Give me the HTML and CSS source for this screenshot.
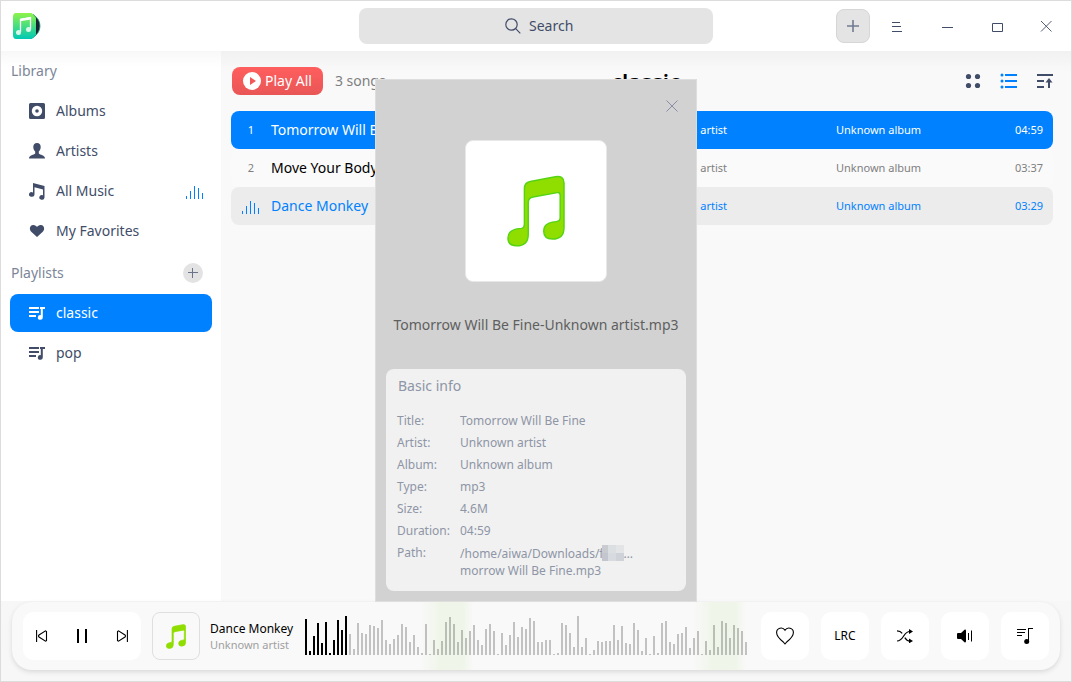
FILE: index.html
```html
<!DOCTYPE html>
<html lang="en">
<head>
<meta charset="utf-8">
<title>Music</title>
<link rel="stylesheet" href="styles.css">
</head>
<body>
<svg class="defs" aria-hidden="true">
  <symbol id="note" viewBox="-1 -1 60 74">
    <path d="M17 13Q17 6.5 23 5.5L49 .5Q58 -.8 58 7V53Q58 65 46 65Q37 65 37 57Q37 49 46 47.5L50 47Q54 46.5 54 43V20Q54 16.5 51 17L26 21.500Q21 22.500 21 27V60Q21 72 9 72Q0 72 0 64Q0 56.500 9 54.500L14 54Q17 53.500 17 50Z"/>
  </symbol>
  <symbol id="playlist" viewBox="0 0 16 14">
    <path d="M0 2h10M0 6h10M0 10h7" fill="none" stroke="currentColor" stroke-width="1.800"/>
    <path d="M11 1h5v2h-2.200v8.500a2.500 2.300 0 1 1-2-2.300V3H11z" fill="currentColor"/>
  </symbol>
  <symbol id="bars" viewBox="0 0 18 14">
    <path d="M0 10h1v3H0zM4 5h1v8H4zM8 0h1v13H8zM12 2h1v11h-1zM16 7h1v6h-1z" fill="currentColor"/>
  </symbol>
</svg>

<div class="window">
  <header class="titlebar">
    <svg class="logo" width="30" height="28" viewBox="0 0 30 28">
      <defs><linearGradient id="g" x1="0" y1="0" x2="0" y2="1"><stop offset="0" stop-color="#8df34a"/><stop offset="1" stop-color="#00c8b6"/></linearGradient></defs>
      <path d="M21 2.500Q28 7 28 14T21 25.500z" fill="#1b2130" stroke="#17a070" stroke-width=".8"/>
      <path d="M4 1H19.500L24 5.500V22.500L20 27H4Q1 27 1 23V5Q1 1 4 1z" fill="url(#g)"/>
      <path d="M8.500 20V7.200L18.500 5.500V17.500" fill="none" stroke="#fff" stroke-width="1.300"/>
      <path d="M8 7L19 5v2.500L8 9.300z" fill="#fff"/>
      <circle cx="6.500" cy="20.500" r="2.500" fill="#d9f8ea"/><circle cx="16.500" cy="17.500" r="2.500" fill="#d9f8ea"/>
    </svg>
    <label class="search">
      <svg width="16" height="16" viewBox="0 0 16 16" fill="none" stroke="currentColor" stroke-width="1.200"><circle cx="6.500" cy="6.500" r="5.700"/><path d="M10.700 10.700L15.300 15.300"/></svg>
      <input type="text" placeholder="Search" aria-label="Search">
    </label>
    <div class="window-tools">
      <button class="add" aria-label="Add"><svg width="12" height="12" viewBox="0 0 12 12" stroke="#717b91" stroke-width="1.600"><path d="M0 6h12M6 0v12"/></svg></button>
      <button class="tool" aria-label="Menu"><svg width="10" height="12" viewBox="0 0 10 12" fill="currentColor"><path d="M0 2h8v1H0zM0 6h9v1H0zM0 11h10v1H0z"/></svg></button>
      <button class="tool" aria-label="Minimize"><svg width="11" height="12" viewBox="0 0 11 12" fill="currentColor"><path d="M0 7h11v1H0z"/></svg></button>
      <button class="tool" aria-label="Maximize"><svg width="11" height="12" viewBox="0 0 11 12" fill="none" stroke="currentColor"><path d="M.5 3.500h10v8H.5z"/></svg></button>
      <button class="tool" aria-label="Close"><svg width="12" height="12" viewBox="0 0 12 12" stroke="currentColor" stroke-width=".9"><path d="M1 1l10.500 10.500M11.500 1L1 11.500"/></svg></button>
    </div>
  </header>

  <div class="body">
    <nav class="sidebar">
      <h2 class="section">Library</h2>
      <a class="item" href="#albums"><svg width="16" height="16" viewBox="0 0 16 16"><path fill-rule="evenodd" fill="currentColor" d="M1.500 0h13Q16 0 16 1.500v13Q16 16 14.500 16h-13Q0 16 0 14.500v-13Q0 0 1.500 0zM8 2.800a5.200 5.200 0 1 0 0 10.400a5.200 5.200 0 1 0 0-10.400zM8 6.200a1.800 1.800 0 1 1 0 3.600a1.800 1.800 0 1 1 0-3.600z"/></svg>Albums</a>
      <a class="item" href="#artists"><svg width="16" height="16" viewBox="0 0 16 16" fill="currentColor"><path d="M8 0C10.500 0 12 1.800 11.700 4.500C11.500 6.500 10.700 7.700 9.800 8.600V10.500C11 12 16 12 16 15.500H0C0 12 5 12 6.200 10.500V8.600C5.300 7.700 4.500 6.500 4.300 4.500C4 1.800 5.500 0 8 0z"/></svg>Artists</a>
      <a class="item" href="#music"><svg width="16" height="17" viewBox="0 0 16 17" fill="currentColor"><path d="M4 0L15.500 3V14.500a2.600 2.300 0 1 1-1.500-2.200V6.500L5.500 4.300V11.500a2.800 2.300 0 1 1-1.500-2z"/></svg>All Music<svg class="playing" width="18" height="14"><use href="#bars"/></svg></a>
      <a class="item" href="#favorites"><svg width="16" height="14" viewBox="0 0 16 14" fill="currentColor"><path d="M8 13L2.500 8C-.5 5 1 1 4.200 .9C6 .8 7.300 1.800 8 3C8.700 1.800 10 .8 11.800 .9C15 1 16.500 5 13.500 8z"/></svg>My Favorites</a>
      <div class="section playlists"><h2>Playlists</h2><button aria-label="New playlist"><svg width="10" height="10" viewBox="0 0 10 10" stroke="#6b748a"><path d="M0 4.500h10M4.500 0v10"/></svg></button></div>
      <a class="item active" href="#classic"><svg width="16" height="14"><use href="#playlist"/></svg>classic</a>
      <a class="item" href="#pop"><svg width="16" height="14"><use href="#playlist"/></svg>pop</a>
    </nav>

    <main class="main">
      <div class="toolbar">
        <div class="actions">
          <button class="play-all"><svg width="18" height="18" viewBox="0 0 18 18"><circle cx="9" cy="9" r="9" fill="#fff"/><path d="M7 5l6 4-6 4z" fill="#f25858"/></svg>Play All</button>
          <span class="count">3 songs</span>
        </div>
        <h1>classic</h1>
        <div class="views">
          <button aria-label="Grid view"><svg width="16" height="16" viewBox="0 0 16 16" fill="currentColor"><circle cx="3.500" cy="3.500" r="2.600"/><circle cx="12.500" cy="3.500" r="2.600"/><circle cx="3.500" cy="12.500" r="2.600"/><circle cx="12.500" cy="12.500" r="2.600"/></svg></button>
          <button class="on" aria-label="List view"><svg width="16" height="16" viewBox="0 0 16 16" fill="currentColor"><circle cx="1" cy="2" r="1.500"/><circle cx="1" cy="8" r="1.500"/><circle cx="1" cy="14" r="1.500"/><path d="M4 1h12v2H4zM4 7h12v2H4zM4 13h12v2H4z"/></svg></button>
          <button aria-label="Sort"><svg width="16" height="16" viewBox="0 0 16 16" fill="none" stroke="currentColor" stroke-width="2"><path d="M0 2h16M0 8h7M0 14h7M12 15V8"/><path d="M8.500 9.500L12 5l3.500 4.500z" fill="currentColor" stroke="none"/></svg></button>
        </div>
      </div>
      <table class="songs">
        <colgroup><col class="c-index"><col><col class="c-artist"><col class="c-album"></colgroup>
        <tbody>
          <tr class="selected"><td>1</td><td>Tomorrow Will Be Fine</td><td>Unknown artist</td><td><span class="cell"><span>Unknown album</span><time>04:59</time></span></td></tr>
          <tr><td>2</td><td>Move Your Body</td><td>Unknown artist</td><td><span class="cell"><span>Unknown album</span><time>03:37</time></span></td></tr>
          <tr class="current"><td><svg width="18" height="14" aria-label="Playing"><use href="#bars"/></svg></td><td>Dance Monkey</td><td>Unknown artist</td><td><span class="cell"><span>Unknown album</span><time>03:29</time></span></td></tr>
        </tbody>
      </table>
    </main>
  </div>

  <footer class="footer">
    <div class="player">
      <div class="controls">
        <button aria-label="Previous"><svg width="12" height="12" viewBox="0 0 12 12" fill="none" stroke="#000" stroke-width="1.100"><path d="M.6 0v12M10.500 1.500v9.200L9.500 11.200 3 7Q2 6 3 5L9.500 .8z"/></svg></button>
        <button aria-label="Pause"><svg width="10" height="14" viewBox="0 0 10 14"><path d="M0 0h2v14H0zM8 0h2v14H8z"/></svg></button>
        <button aria-label="Next"><svg width="12" height="12" viewBox="0 0 12 12" fill="none" stroke="#000" stroke-width="1.100"><path d="M11.400 0v12M1.500 1.500v9.200L2.500 11.200 9 7Q10 6 9 5L2.500 .8z"/></svg></button>
      </div>
      <div class="thumb"><svg width="20" height="25"><use href="#note"/></svg></div>
      <div class="now"><div class="now-title">Dance Monkey</div><div class="now-artist">Unknown artist</div></div>
      <div class="wave">
        <svg id="wave" height="40" width="100%"></svg>
        <input type="range" min="0" max="100" value="10" aria-label="Position">
      </div>
      <div class="extras">
        <button aria-label="Favorite"><svg width="18" height="18" viewBox="0 0 18 18" fill="none" stroke="#000" stroke-width="1.100"><path d="M9 17L7 14.700C3 11.500 .6 8.500 .6 5.500C.6 1 6.500 -.8 9 3.300C11.500 -.8 17.400 1 17.400 5.500C17.400 8.500 15 11.500 11 14.700z"/></svg></button>
        <button class="lrc">LRC</button>
        <button aria-label="Shuffle"><svg width="16" height="14" viewBox="0 0 16 14" fill="none" stroke="#000" stroke-width="1.200"><path d="M0 1.800C3 1.800 4.300 3 5.200 4.300M7.800 8.600C9 10.800 10.500 12 13 12M0 12C7 12 6 2.500 13 2.500"/><path d="M12 0l4 2.500L12 5zM12 9.500l4 2.500-4 2.300z" fill="#000" stroke="none"/></svg></button>
        <button aria-label="Volume"><svg width="16" height="14" viewBox="0 0 16 14"><path d="M1 4h3l3.500-3.300Q9 0 9 2v10Q9 14 7.500 13.300L4 10H1Q0 10 0 9V5Q0 4 1 4zM11 4h1v7h-1zM14 1.500h1v11h-1z"/></svg></button>
        <button aria-label="Play queue"><svg width="16" height="16" viewBox="0 0 16 16"><path d="M0 1h9v1H0zM0 4h8v1H0zM0 7h5v1H0zM11 0h5v1h-4v12.500h-1z"/><circle cx="9.700" cy="13.500" r="2.500"/></svg></button>
      </div>
    </div>
  </footer>

  <section class="dialog" role="dialog" aria-label="Music info">
    <button class="dialog-close" aria-label="Close"><svg width="12" height="12" viewBox="0 0 12 12" stroke="#8086a0" stroke-width=".9"><path d="M.5 .5l11 11M11.500 .5l-11 11"/></svg></button>
    <div class="cover"><svg width="58" height="72"><use href="#note"/></svg></div>
    <p class="file">Tomorrow Will Be Fine-Unknown artist.mp3</p>
    <div class="card">
      <h3>Basic info</h3>
      <dl>
        <dt>Title:</dt><dd>Tomorrow Will Be Fine</dd>
        <dt>Artist:</dt><dd>Unknown artist</dd>
        <dt>Album:</dt><dd>Unknown album</dd>
        <dt>Type:</dt><dd>mp3</dd>
        <dt>Size:</dt><dd>4.6M</dd>
        <dt>Duration:</dt><dd>04:59</dd>
        <dt>Path:</dt><dd class="path">/home/aiwa/Downloads/f<svg class="mosaic" width="22" height="16" viewBox="0 0 22 16" shape-rendering="crispEdges"><path fill="#c8cbd0" d="M0 0h6v8H0z"/><path fill="#dcdfe2" d="M6 0h8v8H6z"/><path fill="#e2e4e6" d="M14 0h8v8h-8z"/><path fill="#c3c6ce" d="M0 8h6v8H0z"/><path fill="#d7dadf" d="M6 8h8v8H6z"/><path fill="#cfd3d9" d="M14 8h8v8h-8z"/></svg>…<br>morrow Will Be Fine.mp3</dd>
      </dl>
    </div>
  </section>
</div>
<script src="app.js"></script>
</body>
</html>
```

FILE: app.js
```js
// Waveform: one 2px bar every 4px, standing on the baseline.
const levels = [
  36, 4, 19, 32, 12, 33, 2, 15, 35, 25, 39,
  21, 6, 32, 22, 21, 30, 29, 27, 35, 15, 11, 16, 20, 31, 28, 13, 20, 8, 2, 31, 1, 15, 6, 14, 33, 38, 31,
  13, 25, 17, 24, 30, 15, 10, 26, 31, 24, 1, 22, 10, 20, 33, 18, 28, 26, 37, 34, 13, 13, 15, 15, 1, 2,
  32, 30, 22, 8, 39, 8, 17, 1, 5, 14, 13, 14, 14, 30, 15, 29, 12, 11, 32, 25, 4, 17, 1, 19, 2, 32, 34,
  13, 11, 21, 22, 28, 7, 17, 24, 1, 14, 5, 30, 8, 34, 32, 17, 30, 27, 24, 13, 1
];
const played = 11;
const wave = document.getElementById('wave');
levels.forEach((level, i) => {
  const bar = document.createElementNS('http://www.w3.org/2000/svg', 'rect');
  bar.setAttribute('x', i * 4);
  bar.setAttribute('y', 39 - level);
  bar.setAttribute('width', 2);
  bar.setAttribute('height', level);
  bar.setAttribute('class', i < played ? 'bar played' : 'bar');
  wave.appendChild(bar);
});
```

FILE: styles.css
```css
* { box-sizing: border-box; }
body { margin: 0; font: 14px/20px "Noto Sans", sans-serif; color: #414d68; }
h1, h2, h3, p, dl, dd { margin: 0; font-weight: 400; }
button { display: flex; align-items: center; justify-content: center; margin: 0; padding: 0; border: 0; background: none; color: inherit; font: inherit; }
svg { display: block; flex: none; }
.defs { position: absolute; width: 0; height: 0; }

.window { position: relative; display: flex; flex-direction: column; min-height: 100vh; border: 1px solid #dcdcdc; background: #f8f8f8; }

.titlebar { display: grid; grid-template-columns: 1fr minmax(200px, 354px) 1fr; align-items: center; height: 50px; padding: 0 11px; background: #fff; }
.search { display: flex; align-items: center; justify-content: center; gap: 8px; height: 36px; padding-left: 10px; border-radius: 8px; background: #e4e4e4; }
.search input { width: 48px; padding: 0; border: 0; outline: 0; background: none; color: inherit; font: inherit; }
.search input::placeholder { color: #414d68; opacity: 1; }
.window-tools { display: flex; justify-content: flex-end; align-items: center; }
.tool { width: 50px; height: 34px; }
.tool:last-child { width: 48px; margin-right: -10px; }
.add { width: 34px; height: 34px; margin-right: 2px; border: 1px solid #d6d6d6; border-radius: 8px; background: #e4e4e4; }

.body { display: flex; flex: 1; }
.sidebar { width: 220px; flex: none; padding: 0 9px; background: linear-gradient(#f8f8f8, #fff 16px); }
.section { display: flex; align-items: center; height: 39px; padding: 0 1px; color: #7c8698; font-size: 14px; line-height: 20px; }
.section h2 { font-size: 14px; }
.playlists { justify-content: space-between; height: 44px; padding: 2px 9px 0 1px; }
.playlists button { width: 20px; height: 20px; border-radius: 50%; background: #e3e3e3; }
.item { display: flex; align-items: center; gap: 11px; height: 38px; margin-top: 2px; padding: 0 8px 0 19px; border-radius: 8px; color: #414d68; text-decoration: none; }
.playlists + .item { margin-top: 0; }
.item.active { background: #0081ff; color: #fff; }
.playing { margin: 3px 0 0 auto; color: #0081ff; }

.main { flex: 1; min-width: 0; padding: 0 18px 0 10px; background: linear-gradient(#f1f1f1, #f9f9f9 20px); }
.toolbar { display: grid; grid-template-columns: 1fr auto 1fr; align-items: center; height: 60px; padding-left: 1px; }
.actions { display: flex; align-items: center; gap: 12px; }
.play-all { gap: 4px; height: 28px; padding: 0 11px; border-radius: 8px; background: linear-gradient(#ff5e5e, #e95656); color: #fff; }
.count { color: #7f7f7f; }
.toolbar h1 { padding-left: 6px; color: #000; font-size: 22px; line-height: 28px; font-weight: 600; }
.views { display: flex; justify-content: flex-end; gap: 20px; }
.views svg { overflow: visible; }
.views .on { color: #0081ff; }

.songs { width: 100%; table-layout: fixed; border-collapse: separate; border-spacing: 0; color: #7f7f7f; font-size: 11px; }
.c-index { width: 40px; }
.c-artist { width: 188px; }
.c-album { width: 217px; }
.songs td { height: 38px; padding: 0; background: #fafafa; }
.songs td:first-child { border-radius: 8px 0 0 8px; text-align: center; }
.songs td:first-child svg { margin: 4px auto 0; }
.songs td:nth-child(2) { color: #000; font-size: 14px; }
.songs td:last-child { padding-right: 10px; border-radius: 0 8px 8px 0; }
.songs .cell { display: flex; justify-content: space-between; }
.songs .selected td, .songs .selected td:nth-child(2) { background: #0081ff; color: #fff; }
.songs .current td, .songs .current td:nth-child(2) { background: #ececec; color: #0081ff; }

.footer { padding: 1px 11px 11px; background: #f7f7f7; }
.player {
  display: flex; align-items: center; height: 68px; padding: 0 11px; border-radius: 20px;
  background:
    linear-gradient(90deg, transparent 39%, #eff5e8 41%, #eff5e8 43%, transparent 44%),
    linear-gradient(90deg, transparent 65%, #eff5e8 67%, #eff5e8 69%, transparent 70%),
    #f9f9f9;
  box-shadow: 0 2px 5px rgba(0, 0, 0, .12);
}
.controls { display: grid; grid-template-columns: 1fr 42px 1fr; width: 118px; height: 48px; border-radius: 10px; background: #fff; }
.thumb { display: flex; align-items: center; justify-content: center; width: 48px; height: 48px; margin-left: 11px; border: 1px solid #dfdfdf; border-radius: 8px; }
.thumb svg { fill: #90de00; stroke: #90de00; stroke-width: 2px; }
.now { width: 105px; padding: 2px 0 0 10px; font-size: 12px; line-height: 16px; white-space: nowrap; }
.now-title { color: #000; }
.now-artist { color: #a0a0a0; font-size: 11px; }
.wave { position: relative; flex: 1; min-width: 0; margin-right: 12px; }
.wave input { position: absolute; inset: 0; width: 100%; margin: 0; opacity: 0; }
.bar { fill: rgba(0, 0, 0, .22); }
.bar.played { fill: #000; }
.extras { display: flex; gap: 12px; color: #000; }
.extras button { width: 48px; height: 48px; border-radius: 10px; background: #fff; }
.extras .lrc { font-size: 12px; }

.dialog { position: absolute; top: 78px; left: 50%; display: flex; flex-direction: column; align-items: center; width: 322px; margin-left: -161px; padding: 60px 10px 10px; border: 1px solid #dedede; background: #d2d2d2; }
.dialog-close { position: absolute; top: 20px; right: 18px; }
.cover { display: flex; align-items: center; justify-content: center; width: 142px; height: 142px; border: 1px solid #e8e8e8; border-radius: 8px; background: #fff; }
.cover svg { fill: #90de00; stroke: #56d414; stroke-width: 1.500px; }
.file { margin: 31px 0 32px; color: #5f5f5f; line-height: 24px; white-space: nowrap; }
.card { width: 100%; padding: 6px 11px 12px; border-radius: 8px; background: #f1f1f1; color: #8e95a6; }
.card h3 { margin-bottom: 13px; padding-left: 1px; font-size: 14px; line-height: 22px; }
.card dl { display: grid; grid-template-columns: 63px 1fr; font-size: 12px; line-height: 22px; }
.card .path { padding-top: 3px; line-height: 17px; }
.mosaic { display: inline-block; height: 16px; margin: -4px 0 -4px -2px; vertical-align: 1px; }
```
